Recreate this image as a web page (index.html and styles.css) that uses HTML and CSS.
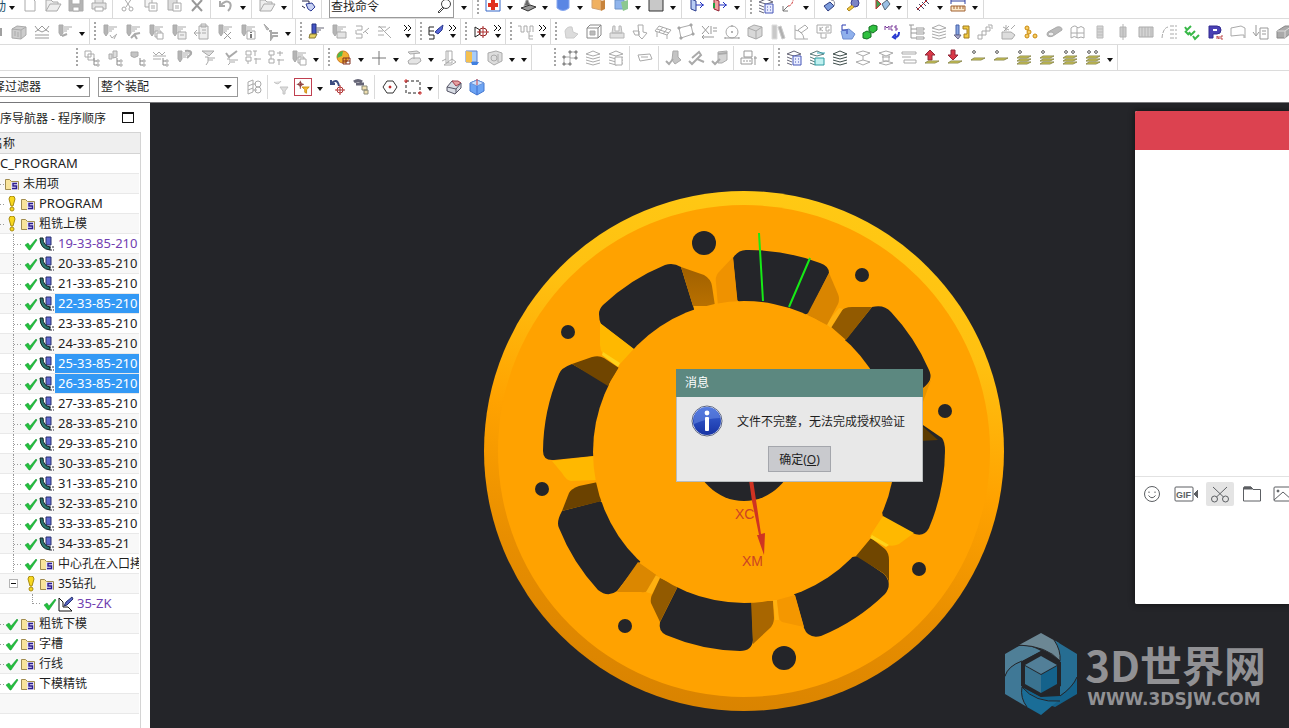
FILE: index.html
```html
<!DOCTYPE html>
<html lang="zh-CN">
<head>
  <meta charset="UTF-8" />
  <meta name="viewport" content="width=device-width, initial-scale=1.0"/>
  <title>工序导航器</title>
  <link rel="stylesheet" href="styles.css">
</head>
<body>

<header class="toolbars">
  <div class="bar bar-top">
    <div class="group">
      <span class="cut-text">动</span>
      <div class="tools" data-tools="v new open save print | cut copy paste delete | undo v | open v | touch |"></div>
      <label class="search">
        <input type="text" value="查找命令" aria-label="查找命令">
        <svg viewBox="0 0 18 18"><circle cx="11" cy="7" r="4.5"/><path d="M8 10l-5 5 1 1 5-5"/></svg>
      </label>
      <div class="tools" data-tools="v"></div>
    </div>
    <div class="group grip"><div class="tools" data-tools="fit v shade v cylinder v cubeOrange cubeGreen v swatch v | exit exitRed v"></div></div>
    <div class="group grip"><div class="tools" data-tools="layerBlue axes v | gem key | play v | measure v ruler v"></div></div>
  </div>

  <div class="bar">
    <div class="group">
      <span class="cut-icon"></span>
      <div class="tools" data-tools="block hatch mill v"></div>
    </div>
    <div class="group grip"><div class="tools" data-tools="millCheck millFork millCopy millPage clip millX millInfo millDrop v"></div></div>
    <div class="group grip"><div class="tools" data-tools="millBlue millBox combA combX _ »"></div></div>
    <div class="group grip"><div class="tools" data-tools="brush »"></div></div>
    <div class="group grip"><div class="tools" data-tools="target »"></div></div>
    <div class="group grip"><div class="tools" data-tools="wave »"></div></div>
    <div class="group grip last"><div class="tools" data-tools="lump frame vise wedge grid plane xt circle cube plates angle kg blob chain mcs tree stack probe steps spark beads tube map bolt nut hatchBox list greens parts flag down solid"></div></div>
  </div>

  <div class="bar bar-inset">
    <div class="group grip"><div class="tools" data-tools="boxes boxTree discTree hatchTree millLoop millFunnel millTick tiles tiles2 millCopy v"></div></div>
    <div class="group grip"><div class="tools" data-tools="ball v plus v plinth v column page camera v v"></div></div>
    <div class="group grip apart"><div class="tools" data-tools="nodes stack stackPage | card | lumpTick curve cubeTick | abc v"></div></div>
    <div class="group grip"><div class="tools" data-tools="layerBlue layerTeal stackDark layerThin layerSwap rows up downRed flat1 flat1 flat3 flat3 flat4 flat4 v"></div></div>
  </div>

  <div class="bar bar-select">
    <span class="drop drop-cut"><select aria-label="选择过滤器"><option>择过滤器</option></select></span>
    <span class="drop"><select aria-label="选择范围"><option>整个装配</option></select></span>
    <div class="tools" data-tools="mesh | funnel snap v orbit walk | hexagon marquee v | house cubeBlue"></div>
  </div>
</header>

<main>
  <aside class="navigator">
    <div class="nav-title">
      <h1>序导航器 - 程序顺序</h1>
      <button class="max" aria-label="最大化"></button>
    </div>
    <div class="nav-body">
      <div class="nav-head">名称</div>
      <ul class="tree" id="tree"></ul>
    </div>
  </aside>

  <section class="stage">
    <svg class="scene" viewBox="150 103 1139 625" preserveAspectRatio="xMidYMid slice">
      <defs>
        <linearGradient id="rim" x1="0.6" y1="0" x2="0.4" y2="1">
          <stop offset="0" stop-color="#ffc914"/>
          <stop offset="0.25" stop-color="#ffc010"/>
          <stop offset="0.5" stop-color="#ffa200"/>
          <stop offset="0.75" stop-color="#e88e00"/>
          <stop offset="1" stop-color="#d98300"/>
        </linearGradient>
        <linearGradient id="wall" x1="0" y1="0" x2="0" y2="1">
          <stop offset="0" stop-color="#a06000"/>
          <stop offset="1" stop-color="#b87000"/>
        </linearGradient>
      </defs>
      <circle cx="744" cy="451" r="260" fill="url(#rim)"/>
      <circle cx="744" cy="451" r="246" fill="#ffa200"/>

      <!-- windows between the spokes -->
      <g fill="#242529">
        <path d="M599 314Q599 309 603 305A201 201 0 0 1 665 265Q673 262 681 267L694 309V330L640 354 601 324Q599 320 599 314z"/>
        <path d="M543 451A201 201 0 0 1 559 374Q561 368 572 364L608 384 625 400 620 460 593 456 554 460Q543 461 543 451z"/>
        <path d="M562 511L600 501 660 540 639 563 617 591Q608 598 598 590A201 201 0 0 1 559 528Q556 522 562 511z"/>
        <path d="M677 588V570H751L753 640Q752 651 740 651A201 201 0 0 1 666 635Q658 631 660 622z"/>
        <path d="M795 596L780 570 858 556 884 574Q893 584 885 594A201 201 0 0 1 821 636Q808 639 804 628z"/>
        <path d="M883 517L870 450 923 425 942 438Q945 442 945 451A201 201 0 0 1 929 528Q924 538 912 533z"/>
        <path d="M847 338L872 307Q884 304 891 312A201 201 0 0 1 929 370Q934 380 923 388L880 395 840 345z"/>
        <path d="M737 300L733 258Q738 250 746 250A201 201 0 0 1 820 263Q829 266 829 273L809 313 770 330z"/>
      </g>

      <!-- spoke side walls -->
      <path fill="url(#wall)" d="M681 267L704 275Q711 279 712 286L715 306H693z"/>
      <path fill="#ef9200" d="M733 257L718 273Q715 277 716 283L718 306H738z"/>
      <path fill="#ffb800" d="M600 323L634 349 618 366 603 354Q600 350 600 345z"/>
      <path fill="#ffd21a" d="M603 352L620 363 618 367 602 355z"/>
      <path fill="#704500" d="M572 364L592 357Q599 355 604 358L619 368 608 386z"/>
      <path fill="#ffb800" d="M552 461L596 456V480L571 481Q566 480 562 473z"/>
      <path fill="#6b4200" d="M598 482L579 486Q571 489 569 493L562 511 602 501z"/>
      <path fill="#db8700" d="M638 562L658 576 649 590Q646 593 641 592H617z"/>
      <path fill="#ffb010" d="M656 575L660 578 652 594 646 592z"/>
      <path fill="#925a00" d="M660 578L678 586 660 622 651 603Q650 598 653 593z"/>
      <path fill="#a86600" d="M751 601H773L774 618Q774 625 769 629L753 644z"/>
      <path fill="#ffb010" d="M773 600H777L779 620H775z"/>
      <path fill="#f49700" d="M777 600L795 595 804 627 782 622Q779 620 779 617z"/>
      <path fill="#704600" d="M871 538L885 549Q889 553 889 560V583Q888 577 883 573L856 556z"/>
      <path fill="#ffb800" d="M883 516L914 533 899 544Q893 547 887 545L870 536z"/>
      <path fill="#ffd21a" d="M872 535L889 545 886 547 870 538z"/>
      <path fill="#5c3b00" d="M920 424L938 440 920 441z"/>
      <path fill="#925a00" d="M872 307H852Q844 307 840 312L830 326 846 340z"/>
      <path fill="#ffb010" d="M839 308L843 309 831 328 826 324z"/>
      <path fill="#d98500" d="M829 273L838 294Q840 299 838 304L827 325 807 315z"/>
      <path fill="#e79300" d="M931 380L923 389V402z"/>

      <circle cx="744" cy="452" r="151" fill="#ffa200"/>
      <circle cx="744" cy="451" r="50" fill="#242529"/>
      <g fill="#242529">
        <circle cx="704" cy="243" r="12"/>
        <circle cx="784" cy="658" r="12"/>
        <circle cx="568" cy="332" r="7"/>
        <circle cx="862" cy="275" r="7"/>
        <circle cx="945" cy="411" r="7"/>
        <circle cx="919" cy="569" r="7"/>
        <circle cx="625" cy="626" r="7"/>
        <circle cx="542" cy="489" r="7"/>
      </g>
      <path d="M759 233L763 301M810 258L789 307" stroke="#16ea16" stroke-width="2" fill="none"/>
      <path d="M749 480L752 501 759 535 757 535 764 555 765 533 761 534 756 500 753 480z" fill="#cf3322"/>
      <g class="axis">
        <text x="735" y="519">XC</text>
        <text x="742" y="566">XM</text>
      </g>
    </svg>

    <div class="dialog" role="dialog" aria-labelledby="dlg-title">
      <h2 id="dlg-title">消息</h2>
      <div class="dialog-body">
        <svg class="info" viewBox="0 0 32 32">
          <defs>
            <linearGradient id="blue" x1="0" y1="0" x2="0" y2="1">
              <stop offset="0" stop-color="#3c66d8"/>
              <stop offset="1" stop-color="#1733a4"/>
            </linearGradient>
          </defs>
          <circle cx="16" cy="16" r="15" fill="#fff" stroke="#5a6482"/>
          <circle cx="16" cy="16" r="14" fill="url(#blue)"/>
          <path d="M3 17A13 13 0 0 1 29 13Q16 13 3 19z" fill="#6f92e8" opacity="0.5"/>
          <circle cx="16" cy="8" r="2.4" fill="#fff"/>
          <rect x="14" y="12" width="4" height="14" rx="1" fill="#fff"/>
        </svg>
        <p>文件不完整，无法完成授权验证</p>
      </div>
      <button class="ok">确定(<u>O</u>)</button>
    </div>

    <div class="chat">
      <div class="chat-head"></div>
      <div class="chat-log"></div>
      <div class="chat-tools">
        <button aria-label="表情"><svg viewBox="0 0 18 18"><circle cx="9" cy="9" r="7.5"/><path d="M6 6.500v1.500M12 6.500v1.500M5.500 10.500Q9 15 12.500 10.500"/></svg></button>
        <button class="gif" aria-label="GIF"><svg viewBox="0 0 24 18"><rect x="1" y="2" width="18" height="14" rx="1"/><text x="2" y="13">GIF</text><path d="M20 9l4-4v8z" class="solid"/></svg></button>
        <button class="on" aria-label="截图"><svg viewBox="0 0 18 18"><circle cx="3.500" cy="14" r="3"/><circle cx="14.500" cy="14" r="3"/><path d="M5.500 12L16 2M12.500 12L2 2"/></svg></button>
        <button aria-label="文件"><svg viewBox="0 0 18 18"><path d="M.5 16V3Q.5 2 2 2H8L10 4.500H17.500V16z"/><path d="M1 2h7l1.500 2H1z" class="solid"/></svg></button>
        <button class="pic" aria-label="图片"><svg viewBox="0 0 22 18"><rect x="1" y="2" width="20" height="14" rx="1"/><circle cx="5" cy="6" r="1" class="solid"/><path d="M1 15l9-8 9 8"/></svg></button>
      </div>
      <textarea aria-label="消息"></textarea>
    </div>

    <div class="brand">
      <svg viewBox="0 0 72 82">
        <path d="M36 0L54 10Q56 18 55 28 40 13 14 12z" fill="#6c8794"/>
        <path d="M49 7L72 21V44Q68 54 55 63V28Q56 17 49 7z" fill="#266d92"/>
        <path d="M72 44V61L50 74Q30 68 17 54L36 64 55 63Q68 54 72 44z" fill="#14628b"/>
        <path d="M53 68L36 82 22 74Q15 65 17 54 30 68 53 68z" fill="#1a6d97"/>
        <path d="M22 74L0 61V44Q3 33 17 28V54Q15 65 22 74z" fill="#3f7896"/>
        <path d="M0 43V21L14 13Q26 12 36 18L17 28Q4 33 0 43z" fill="#4f7f97"/>
        <path d="M36 18L56 29V53L36 64 16 53V29z" fill="#242529"/>
        <path d="M36 23L52 32 36 41 20 32z" fill="#527f98"/>
        <path d="M20 33L36 42V60L20 51z" fill="#3a7390"/>
        <path d="M52 33L36 42V60L52 51z" fill="#14628b"/>
        <path d="M14 12Q42 13 55 28Q56 17 49 7M72 44Q68 54 55 63M17 54Q30 70 55 68M17 54Q15 65 22 74M17 28Q3 33 0 43" fill="none" stroke="#242529"/>
      </svg>
      <div>
        <strong>3D世界网</strong>
        <span>WWW.3DSJW.COM</span>
      </div>
    </div>
  </section>
</main>

<script src="app.js"></script>
</body>
</html>
```

FILE: styles.css
```css
* {
  box-sizing: border-box;
}

body {
  margin: 0;
  height: 100vh;
  display: flex;
  flex-direction: column;
  overflow: hidden;
  background: #fff;
  color: #1e1e1e;
  font-family: "Noto Sans", "Noto Sans CJK SC", sans-serif;
  font-size: 12px;
}

button {
  border: 0;
  padding: 0;
  background: none;
  font: inherit;
  color: inherit;
}

/* toolbars */
.toolbars {
  flex: none;
  overflow: hidden;
  border-bottom: 1px solid #77777a;
}

.bar {
  display: flex;
  height: 26px;
  border-bottom: 1px solid #dcdcdc;
}

.bar-top {
  margin-top: -7px;
}

.bar-inset {
  padding-left: 72px;
}

.group {
  display: flex;
  flex: none;
  align-items: center;
  padding-right: 1px;
  border-right: 1px solid #dadada;
}

.bar-top .group {
  padding-right: 2px;
}

.group.last {
  border: 0;
}

.group.apart {
  margin-left: 18px;
}

.grip::before {
  content: "";
  width: 2px;
  height: 20px;
  margin: 0 2px 0 4px;
  background: repeating-linear-gradient(#a6a6a6 0 2px, transparent 2px 4px);
}

.cut-text {
  width: 6px;
  display: flex;
  justify-content: flex-end;
  overflow: hidden;
  color: #20506a;
}

.cut-icon {
  width: 7px;
  height: 8px;
  border-right: 5px solid #fff;
  background: #a0a0a0;
}

.tools {
  display: flex;
  align-items: center;
}

.tool {
  display: flex;
  justify-content: center;
  width: 23px;
}

.tool svg {
  width: 18px;
  height: 18px;
  fill: none;
  stroke: #aaa;
}

.tool.narrow {
  width: 20px;
}

.tool.boxed svg {
  border: 1px solid #c04050;
}

.caret {
  width: 12px;
  height: 18px;
  display: flex;
  flex-direction: column;
  align-items: center;
  justify-content: center;
  padding-top: 4px;
}

.caret::after {
  content: "";
  border: 3px solid transparent;
  border-top: 4px solid #111;
  border-bottom: 0;
}

.caret.more {
  padding: 0;
  gap: 3px;
}

.caret svg {
  width: 8px;
  height: 6px;
  fill: none;
  stroke: #111;
}

.sep {
  width: 6px;
  height: 24px;
  border-left: 1px solid #dadada;
  margin-left: 2px;
  margin-right: -2px;
}

.space {
  width: 6px;
}

.search {
  display: flex;
  align-items: center;
  width: 125px;
  height: 24px;
  margin: 0 4px;
  border: 1px solid #9a9a9a;
}

.search input {
  flex: 1;
  min-width: 0;
  border: 0;
  padding: 0 1px;
  outline: 0;
  font: inherit;
  color: inherit;
}

.search svg {
  width: 18px;
  height: 18px;
  fill: none;
  stroke: #444;
}

.bar-select {
  height: 31px;
  align-items: center;
  border: 0;
}

.drop {
  position: relative;
  width: 140px;
  margin: 0 4px 0 8px;
}

.drop-cut {
  width: 100px;
  margin: 0 0 0 -10px;
}

.drop select {
  appearance: none;
  display: block;
  width: 100%;
  height: 20px;
  padding: 0 2px;
  border: 1px solid #999;
  border-radius: 0;
  background: #fff;
  color: inherit;
  font: inherit;
}

.drop::after {
  content: "";
  position: absolute;
  right: 6px;
  top: 8px;
  border: 4px solid transparent;
  border-top-color: #111;
  border-bottom: 0;
}

/* navigator */
main {
  flex: 1;
  display: flex;
  min-height: 0;
}

.navigator {
  flex: none;
  display: flex;
  flex-direction: column;
  width: 141px;
  margin-right: 9px;
}

.nav-title {
  display: flex;
  align-items: center;
  justify-content: space-between;
  height: 29px;
  padding-right: 7px;
}

.nav-title h1 {
  margin: 0;
  font-size: 12px;
  font-weight: normal;
}

.max {
  width: 12px;
  height: 11px;
  border: 1px solid #111;
  border-top-width: 2px;
}

.nav-body {
  flex: 1;
  border-right: 1px solid #d4d4d4;
}

.nav-head {
  height: 22px;
  line-height: 22px;
  border-top: 1px solid #d4d4d4;
  border-bottom: 1px solid #d4d4d4;
  background: #efefef;
  text-indent: -9px;
  overflow: hidden;
}

.tree {
  margin: 0;
  padding: 0;
  list-style: none;
}

.row {
  display: flex;
  align-items: center;
  height: 20px;
  margin-right: 1px;
  border-bottom: 1px solid #e9e9e9;
  overflow: hidden;
  white-space: nowrap;
}

.row:nth-child(even) {
  background: #f8f8f8;
}

.row svg {
  flex: none;
  width: 16px;
  height: 16px;
}

.branch {
  flex: none;
  width: 4px;
  height: 20px;
  background: repeating-linear-gradient(90deg, #999 0 1px, transparent 1px 3px) 0 10px / 8px 1px no-repeat;
}

.level2 .branch {
  width: 10px;
  margin-left: 13px;
  border-left: 1px dotted #999;
}

.level3 .branch {
  width: 10px;
  height: 10px;
  margin-left: 32px;
  align-self: flex-start;
  border-left: 1px dotted #999;
  background-position: 0 9px;
}

.fold {
  flex: none;
  width: 9px;
  height: 9px;
  margin: 0 5px 0 9px;
  border: 1px solid #b5b5b5;
  background: linear-gradient(#111, #111) center / 5px 1px no-repeat #fff;
}

.label {
  flex: 1;
  height: 19px;
  line-height: 19px;
  padding-left: 3px;
}

.label.latin {
  font-size: 13px;
}

.purple .label {
  color: #7040b0;
}

.selected .label {
  background: #3399f5;
  color: #fff;
}

.root .label {
  padding: 0;
}

/* graphics window */
.stage {
  position: relative;
  flex: 1;
  min-width: 0;
  overflow: hidden;
  background: #242529;
}

.scene {
  display: block;
  width: 100%;
  height: 100%;
}

.axis {
  font: 14px "Liberation Sans", sans-serif;
  fill: #cc4424;
}

.dialog {
  position: absolute;
  left: 526px;
  top: 266px;
  width: 247px;
  padding-bottom: 9px;
  border: 1px solid #b8bcbc;
  border-top: 0;
  background: #e8e8e8;
}

.dialog h2 {
  margin: 0 -1px;
  padding-left: 9px;
  line-height: 28px;
  background: #5c8880;
  color: #fff;
  font-size: 12px;
  font-weight: normal;
}

.dialog-body {
  display: flex;
  align-items: center;
  gap: 14px;
  height: 48px;
  padding-left: 14px;
}

.dialog-body p {
  margin: 0;
}

.info {
  width: 32px;
  height: 32px;
}

.ok {
  display: block;
  width: 63px;
  height: 26px;
  margin: 1px auto 0;
  border: 1px solid #a4a6ac;
  background: #c9cace;
}

.chat {
  position: absolute;
  left: 985px;
  right: 0;
  top: 8px;
  height: 493px;
  display: flex;
  flex-direction: column;
  border-radius: 2px 0 0 2px;
  overflow: hidden;
  background: #fff;
  box-shadow: 0 0 6px #111;
}

.chat-head {
  height: 39px;
  background: #dc4250;
}

.chat-log {
  height: 327px;
  border-bottom: 1px solid #e2e2e2;
}

.chat-tools {
  display: flex;
  align-items: center;
  gap: 4px;
  height: 34px;
  padding-left: 3px;
}

.chat-tools button {
  flex: none;
  width: 28px;
  height: 24px;
  display: flex;
  align-items: center;
  justify-content: center;
  border-radius: 2px;
}

.chat-tools .gif {
  width: 32px;
}

.chat-tools .gif svg {
  width: 24px;
}

.chat-tools .pic svg {
  width: 22px;
}

.chat-tools .on {
  background: #e4e4e4;
}

.chat-tools svg {
  width: 18px;
  height: 18px;
  fill: none;
  stroke: #5c5f63;
}

.chat-tools .solid {
  fill: #5c5f63;
}

.chat-tools text {
  font: bold 9px "Liberation Sans", sans-serif;
  fill: #5c5f63;
  stroke: none;
}

.chat textarea {
  flex: 1;
  border: 0;
  resize: none;
  outline: 0;
}

.brand {
  position: absolute;
  right: 23px;
  bottom: 13px;
  display: flex;
  align-items: center;
  gap: 8px;
  color: #919194;
}

.brand svg {
  width: 72px;
  height: 82px;
}

.brand strong {
  display: block;
  font: bold 42px/50px "Noto Sans CJK SC", sans-serif;
}

.brand span {
  display: block;
  padding-left: 2px;
  font: bold 17px/20px "DejaVu Sans", sans-serif;
}
```

FILE: app.js
```javascript
// pieces shared by several icons
const mill = '<path d="M3 2h4v8l-2 3-2-3z" fill="#b4b4b4"/><path d="M8 4h8M8 6h5M8 8h3"/>';
const stack = '<path d="M2 5l7-3 7 3-7 2zM2 8l7 2 7-2M2 11l7 2 7-2M2 14l7 2 7-2"/>';
const sheet = (y) => `<path d="M5 ${y}h11l-4 2H2z" fill="#d8cf4c" stroke="#8f8d55"/>`;
const tree = '<path d="M11 9v7h3M11 12h3" stroke="#888"/><path d="M14 11h2v2h-2zM14 15h2v2h-2z"/>';
const diamond = (x) => `<path d="M${x} 1l2 2-2 2-2-2z" fill="#aaa" stroke="#888"/>`;

const icons = {
  new: '<path d="M4 1h7l3 3v10H4z"/>',
  open: '<path d="M2 14V3h5l2 2h5v2M2 14l4-7h11l-4 7z" fill="#eee"/>',
  save: '<path d="M2 2h14v12H2z" fill="#b4b4b4"/><path d="M5 2h8v5H5zM6 10h6v4H6z" fill="#fff"/>',
  print: '<path d="M5 6V1h8v5M2 6h14v6H2z" fill="#e4e4e4"/><path d="M5 10h8v4H5z" fill="#fff"/>',
  cut: '<path d="M5 1l6 9M13 1L7 10"/><circle cx="5" cy="12" r="2"/><circle cx="12" cy="12" r="2"/>',
  copy: '<path d="M3 2h7v8H3z" fill="#f4f4f4"/><path d="M7 6h8v8H7zM9 9h4M9 11h4" fill="#fff"/>',
  paste: '<path d="M3 2h9v11H3z" fill="#ddd"/><path d="M8 6h8v8H8zM10 9h4M10 11h4" fill="#fff"/>',
  delete: '<path d="M4 3l10 11M14 3L4 14" stroke="#999" stroke-width="2"/>',
  undo: '<path d="M3 4v5h5M3 9q6-7 10-3 2 4-2 8" stroke-width="2"/>',
  touch: '<path d="M3 4h7v5M3 9l3 2" stroke="#224"/><path d="M7 7l6-1 3 4-4 4-3-2z" fill="#c8d2f4" stroke="#2b3a94"/>',
  fit: '<path d="M2 1h14v13H2z" fill="#fff" stroke="#3668c8"/><path d="M4 7h4V3M14 7h-4V3M4 9h4v4M14 9h-4v4" stroke="#e03020" stroke-width="2"/>',
  shade: '<path d="M8 1l3 7-6 1z" fill="#666"/><path d="M2 11l9-3 6 2-8 4z" fill="#999" stroke="#333"/>',
  cylinder: '<path d="M3 2h12v9q-6 5-12 0z" fill="#5a86e4" stroke="#88a8f0"/>',
  cubeOrange: '<path d="M3 3l9-2v12l-9-2z" fill="#f0b060" stroke="#d0a070"/><path d="M12 4l4-1v9l-4 2z" fill="#c8843c" stroke="none"/>',
  cubeGreen: '<path d="M3 3h9v9H3z" fill="#8fb4ec" stroke="#6f94c8"/><path d="M9 5l7-2v9l-5 2z" fill="#8cc890" stroke="none"/>',
  swatch: '<path d="M2 0h14v14H2z" fill="#c8c8c8" stroke="#333"/>',
  exit: '<path d="M3 2l5 2v10l-5-2zM3 2h7" fill="#b8ccf4" stroke="#2c3e90"/><path d="M8 8h8M12 5l3 3-3 3" stroke="#2030c0"/>',
  exitRed: '<path d="M3 2l5 2v10l-5-2zM3 2h7" fill="#f0a0a0" stroke="#902030"/><path d="M8 8h8M12 5l3 3-3 3" stroke="#2030c0"/><path d="M3 6v5" stroke="#20a040" stroke-width="2"/>',
  layerBlue: '<path d="M2 5l7-3 7 3-7 2zM2 8l5 2M2 11l5 2M2 14l5 2" stroke="#667"/><path d="M8 7h8v9H8z" fill="#e8ecff" stroke="#4656b8"/><path d="M10 10h1M13 10h1M10 13h1M13 13h1" stroke="#4656b8"/>',
  layerTeal: '<path d="M2 5l7-3 7 3-7 2zM2 8l5 2M2 11l5 2M2 14l5 2" stroke="#5a7a7a"/><path d="M7 9h9v7H7z" fill="#bff0f0" stroke="#2a9aa0"/><path d="M9 4h8" stroke="#3ab"/>',
  stackDark: `<g stroke="#3d4c4a">${stack}</g>`,
  axes: '<path d="M3 14V9M3 14h5M3 14l5-5" stroke="#777"/><path d="M8 9q4 0 5-6l3-2" stroke="#d04040" stroke-dasharray="3 1"/>',
  gem: '<path d="M3 9l6-4 4 4-6 5z" fill="#7c9cdc" stroke="#2c3a80"/><path d="M10 3q5 0 3 6" stroke="#889"/>',
  key: '<circle cx="11" cy="6" r="4" fill="#7c84c4" stroke="#3a3f90"/><path d="M8 8l-5 4 2 2 5-4" fill="#f0c840" stroke="#b08820"/>',
  play: '<path d="M3 2l5 5-5 5z" fill="#40a050" stroke="#c03030"/><path d="M9 7l5-4 3 4-5 6z" fill="#9cc0e4" stroke="#567"/>',
  measure: '<path d="M3 13L15 1" stroke="#d02020"/><path d="M5 7l5 5M8 5l4 4M11 3l4 4M2 10l4 4" stroke="#446"/>',
  ruler: '<path d="M2 2v5M16 2v5M2 4h14" stroke="#2c3ea0"/><path d="M2 9h14v5H2zM5 9v3M8 9v3M11 9v3M14 9v3" fill="#fbe8c8" stroke="#a06030"/>',
  block: '<path d="M2 6l5-3 9 1v8l-5 4-9-1z" fill="#ccc"/><path d="M2 6l9 1 5-3M11 7v9M5 8v5M8 9v5"/>',
  hatch: '<path d="M2 3l3 4 4-4 4 4 3-4M2 9l3-2 4 2 4-2 3 2M2 12h14M2 15h14" stroke="#999"/>',
  mill: mill + '<path d="M6 13l5-2" stroke-width="2"/>',
  millCheck: mill + '<path d="M9 12l2 3 5-4M15 12l-2 4"/>',
  millFork: mill + '<path d="M7 15l4-4 5-1M10 11l3 5" stroke-width="2"/>',
  millCopy: mill + '<path d="M8 8h6v6H8z" fill="#eee"/><path d="M10 10h6v6h-6z" fill="#fff"/>',
  millPage: mill + '<path d="M8 9h8v7H8zM10 12h4" fill="#eee"/>',
  clip: '<path d="M6 3h9v13H6zM8 1h5v3H8z" fill="#eee"/><path d="M9 7h4M9 10h4M1 10h7M4 7l-3 3 3 3"/>',
  millX: mill + '<path d="M8 9l7 7M15 9l-7 7" stroke="#999"/>',
  millInfo: mill + '<path d="M8 8h8v8H8z" fill="#fff"/><path d="M12 9v1M12 11v4" stroke="#777" stroke-width="2"/>',
  millDrop: '<path d="M2 1l5 5-2 1z" fill="#bbb"/><path d="M7 8h2v8l2-3h5M9 10h7" stroke-width="2"/>',
  millBlue: '<path d="M5 1h4v10H5z" fill="#4454c4" stroke="#223080"/><path d="M3 11h7l-2 4H2z" fill="#e4d060" stroke="#887830"/><path d="M9 5h8M9 7h5M9 9h3" stroke="#667"/>',
  millBox: mill + '<path d="M7 9h9v6H7z" fill="#e4e4e4"/>',
  combA: '<path d="M3 3h6v4H4M3 7v4h6M3 15h6v-4M10 10l6-5M12 8l3 3"/>',
  combX: '<path d="M2 4h8M2 8h5M2 12h6M3 3l12 12M9 8l5-4"/>',
  brush: '<path d="M7 4H2v4h5M2 8v4h5M7 12v4H2" stroke="#222"/><path d="M8 9l3-3 5-4-1 5-4 4z" fill="#5868d8" stroke="#2c3a90"/>',
  target: '<path d="M3 4v10M3 4l5 3v4l-5 3" stroke="#222"/><circle cx="11" cy="9" r="4" stroke="#902020"/><path d="M11 3v12M5 9h12" stroke="#b03030"/>',
  wave: '<path d="M1 3h3v6h3V3h3v6h3V3h3v6M12 10v6h4M12 13h4"/>',
  lump: '<path d="M3 8q2-5 7-4l1 5 5 2-4 4H4z" fill="#dcdcdc" stroke="#ccc"/>',
  frame: '<path d="M2 5l3-3h11v10l-3 3H2zM2 5h11v10M13 5l3-3" stroke="#888"/><path d="M5 8h5v4H5z" fill="#bbb"/>',
  vise: '<path d="M5 3h2v5h4V3h2l1 7H4zM2 10h14v5H2z" fill="#e0e0e0" stroke="#b8b8b8"/>',
  wedge: '<path d="M7 2h5v7l4 1-5 6-3-3zM2 8h6v4H4z"/>',
  grid: '<path d="M5 3l12 4-4 5L1 8zM9 4l-4 5M13 6l-4 5M3 6l12 4M3 9v5M13 12v4"/>',
  plane: '<path d="M2 5l12-3 2 9-12 4z"/><path d="M1 4h2v2H1zM13 1h2v2h-2zM15 10h2v2h-2zM3 14h2v2H3z" fill="#999"/>',
  xt: '<path d="M2 3l7 8M9 3l-7 8M11 3v8M13 5h4M13 8h4M2 14h12M2 14l2-2M2 14l2 2" stroke="#999"/>',
  circle: '<circle cx="9" cy="9" r="6"/><path d="M9 2v2M9 8v2M8 9h2M2 15h14M2 14v2M16 14v2" stroke="#999"/>',
  cube: '<path d="M2 5l6-3 8 2v9l-6 3-8-3z" fill="#d8d8d8"/><path d="M2 5l8 3 6-4M10 8v8"/>',
  plates: '<path d="M3 2h5v14H3z" fill="#c8c8c8" stroke="#ddd"/><path d="M9 4l3-1 4 12-3 1z" fill="#b0b0b0" stroke="#ccc"/>',
  angle: '<path d="M3 2v14h13M3 7q8 1 9 9M6 7l7-5 3 3-7 5z"/>',
  kg: '<path d="M2 2h14v8H2zM5 4v4M5 6l3-2M5 6l3 2M14 4h-3v4h3V6M6 10v5h5v-4"/>',
  blob: '<path d="M3 8l8-2 6 5-3 5H5z" fill="#8fb0ec" stroke="#6c8cd0"/><path d="M8 2H4v5h4M9 6v5" stroke="#2c3cb0"/>',
  chain: '<path d="M2 10l4-2 4 2v4l-4 2-4-1zM8 4l4-2 4 1v4l-4 3-4-2z" fill="#30c040" stroke="#107020"/>',
  mcs: '<path d="M1 7V3l2 2 2-2v4M9 3H7v4h2M13 3h-2v2h2v2h-2" stroke="#7a3a9a"/><path d="M15 9q0 5-4 5M12 11l-3 3 3 2" stroke="#2838d0" stroke-width="2"/>',
  tree: '<path d="M2 2h5M4 2v13h4M4 6h4M4 10h4M9 5h8v2H9zM9 9h8v2H9zM9 14h8v2H9z" stroke="#999"/>',
  stack: stack,
  probe: '<path d="M3 2h3v10H3z" fill="#88a4e0" stroke="#4460a8"/><path d="M1 12h7l-3 4z" fill="#aac" stroke="#668"/><path d="M10 3h6v12h-5v-4h3V6h-4z" fill="#f0c840" stroke="#a07c20"/>',
  steps: '<path d="M2 12h4v4H2zM6 8h4v4H6zM10 4h4v4h-4zM12 2h4v4"/>',
  spark: '<path d="M3 9h9l4 3-3 4H3z" fill="#ddd"/><path d="M7 2v6M4 4l6 3M10 3L5 8M12 6l4-4"/>',
  beads: '<g fill="#f8cc60" stroke="#c88a10"><circle cx="5" cy="5" r="2"/><circle cx="5" cy="13" r="2"/><circle cx="13" cy="13" r="2"/><circle cx="7" cy="9" r="2"/></g>',
  tube: '<path d="M3 9l9-5q5-1 5 3l-9 6q-6 2-6-2z" fill="#bbb"/><ellipse cx="6" cy="11" rx="3" ry="2" fill="#eee"/>',
  map: '<path d="M3 5q4-4 7 0 3-3 6 0v10q-3-2-6 0-4-3-7 0zM9 4v11M3 10h13"/>',
  bolt: '<path d="M6 3h6v12H6zM6 6h6M6 9h6M6 12h6" fill="#d4d4d4" stroke="#bbb"/>',
  nut: '<path d="M9 1v16M6 4h6v10H6z" fill="#ccc" stroke="#b4b4b4"/>',
  hatchBox: '<path d="M2 4h14v10H2z" fill="#d4d4d4"/><path d="M5 4v10M8 4v10M11 4v10M14 4v10" stroke="#b4b4b4"/>',
  list: '<path d="M2 15q1-10 6-11M10 3h7M10 7h7M10 11h7M10 15h7" stroke-dasharray="4 1"/>',
  greens: '<path d="M2 4l2 3 4-4M6 9l2 3 4-4M10 13l2 3 4-4M2 8l4 4" stroke="#38b848" stroke-width="2"/>',
  parts: '<path d="M3 3h8q4 0 4 4t-4 4H7v4H3z" fill="#4a40b4" stroke="#322a90"/><path d="M7 6h4v2H7z" fill="#fff" stroke="none"/><path d="M11 16v-3l2 3v-3M17 13h-2v3h2" stroke="#c04848"/>',
  flag: '<path d="M2 5l10-2 4 2v10M2 5v8l10-1M12 12h3v3"/>',
  down: '<path d="M4 2v10M1 9l3 4 3-4M8 5h8v11H8zM10 8h4M10 11h4" stroke="#999"/>',
  solid: '<path d="M2 8l8-5h7v6l-7 6H2z" fill="#aaa" stroke="#888"/><path d="M2 8h8l7-5M10 8v7" stroke="#ddd"/>',
  boxes: '<path d="M2 2h6v6H2zM5 5h6v6H5z"/>' + tree,
  boxTree: '<path d="M3 10V5h3v5zM7 9V2h4v6z" fill="#ddd"/>' + tree,
  discTree: '<path d="M2 3h7v4q-4 3-7 0z" fill="#c4c4c4"/>' + tree,
  hatchTree: '<path d="M1 3l3 3 3-3 3 3 3-3M1 7h13M1 10h8"/>' + tree,
  millLoop: mill + '<path d="M10 2q7-1 6 3l-4 4" stroke-width="2"/>',
  millFunnel: '<path d="M4 2h12l-5 5z" fill="#ddd"/><path d="M7 8h3v5l-2 3M10 9h7M10 11h5"/>',
  millTick: '<path d="M5 4l3 4 8-6" stroke-width="2"/><path d="M6 10h3v4l-2 2M10 11h7M10 13h4"/>',
  tiles: '<path d="M2 2h5v4H2zM2 8h5v4H2zM9 2h4M11 2v5M10 10h7M12 9v6M4 12v3"/>',
  tiles2: '<path d="M2 2h5v4H2zM2 10h5v4H2zM4 6v4M10 4h6M13 2v5M10 11h7M12 10v6"/>',
  ball: '<circle cx="8" cy="8" r="6" fill="#f0b030" stroke="#d07820"/><path d="M8 2q-6 1-6 7l5-2z" fill="#50b848" stroke="none"/><path d="M8 9h7v6H8zM8 12h7M11 9v6" stroke="#803020"/>',
  plus: '<path d="M9 2v14M2 9h14" stroke="#777"/>',
  plinth: '<path d="M3 3l9-1 3 2-10 1zM9 5v5M3 12l4-3h8l1 3-4 3H4z" fill="#e4e4e4"/>',
  column: '<path d="M6 2h6v12H6zM8 2v12M2 12l4-2M12 10l4 3-5 3H4z"/>',
  page: '<path d="M3 2h11v11H3z" fill="#a8ccf8" stroke="#6080c8"/><path d="M3 2l6 1v11l-6-1z" fill="#f4c050" stroke="none"/><path d="M8 13h8l-2 3H9z" fill="#4080e0" stroke="none"/>',
  camera: '<path d="M2 4l8-2 6 2v8l-8 4-6-4z" fill="#ddd"/><circle cx="8" cy="9" r="3"/><path d="M12 5v8"/>',
  nodes: '<path d="M3 8h6v7H3zM9 3h6v6H9z"/><path d="M2 7h2v2H2zM8 14h2v2H8zM14 2h2v2h-2zM8 2h2v2H8zM14 8h2v2h-2zM2 14h2v2H2z" fill="#888" stroke="#888"/>',
  stackPage: stack + '<path d="M8 8h7v8H8z" fill="#fff"/>',
  card: '<path d="M2 6l12-1 2 5-12 2zM5 8h7"/>',
  lumpTick: '<path d="M8 2h5v6l3 3-6 4-3-4z" fill="#c4c4c4"/><path d="M1 12l3 3 4-5" stroke-width="2"/>',
  curve: '<path d="M4 9l7-6 2 3-4 4 7 3M1 12l3 3 5-5" stroke-width="2"/>',
  cubeTick: '<path d="M7 3l9-1v9l-5 3H7z" fill="#d4d4d4"/><path d="M7 5l9-1M1 12l3 3 5-5" stroke-width="2"/>',
  abc: '<path d="M4 2h8v6H4zM1 9h11v6H1zM3 12h2M6 12h2M9 12h2M14 9h3M15 7v9" stroke="#999"/>',
  layerThin: '<path d="M2 4l7-2 7 2-7 3zM2 13l7-2 7 2-7 3zM9 7v4"/>',
  layerSwap: '<path d="M2 4l7-2 7 2-7 3zM2 14l7-2 7 2-7 2zM5 8h8M6 6v6h6V6"/>',
  rows: '<path d="M2 3h14v2H2zM2 8h9M4 11h12v3H4z"/>',
  up: '<path d="M7 1l5 5H9v5H5V6H2z" fill="#d83848" stroke="#902838"/>' + sheet(12),
  downRed: '<path d="M5 1h4v5h3l-5 5-5-5h3z" fill="#d83848" stroke="#902838"/>' + sheet(12),
  flat1: sheet(9) + diamond(5),
  flat3: sheet(7) + sheet(10) + sheet(13) + diamond(5),
  flat4: sheet(7) + sheet(10) + sheet(13) + diamond(5) + diamond(12),
  mesh: '<path d="M3 4l5-2v12l-5 2zM3 8l5-2M3 12l5-2M8 6h3M8 12h4"/><circle cx="13" cy="6" r="3"/><circle cx="13" cy="12" r="3"/>',
  funnel: '<path d="M2 4q4 4 7-1M8 9h8l-3 4v3h-2v-3z" fill="#ddd" stroke="#c4c4c4"/>',
  snap: '<path d="M6 2v9M2 6h8" stroke="#802828"/><circle cx="6" cy="6" r="2" stroke="#802828"/><path d="M8 9h8l-3 3v4l-2-1v-3z" fill="#f4b830" stroke="#c88a10"/>',
  orbit: '<path d="M2 6q6-7 8 2M2 2v4h4" stroke="#3c4c80" stroke-width="2"/><circle cx="11" cy="12" r="3" stroke="#b03030"/><path d="M11 7v10M6 12h10" stroke="#b03030"/>',
  walk: '<path d="M2 4q4-3 8 0M4 6h8" stroke="#667" stroke-width="3"/><path d="M10 8h5v4h-5zM12 12h4v4h-4z" fill="#f0e0b0" stroke="#887"/>',
  hexagon: '<path d="M6 3h6l4 6-4 6H6L2 9z" stroke="#333"/><circle cx="9" cy="9" r="1" fill="#c02020" stroke="#c02020"/>',
  marquee: '<path d="M2 3h14v12H2z" stroke="#222" stroke-dasharray="3 2"/><path d="M1 2h2v2H1zM15 14h2v2h-2z" stroke="#d03030"/>',
  house: '<path d="M2 9l5-6 9 2v5l-6 6-8-3z" fill="#d8dce4" stroke="#556"/><path d="M7 3l4 5 5-3-3-2z" fill="#e8a0a0" stroke="#a04050"/><path d="M2 9l9 2v4M11 11l5-6" stroke="#556"/>',
  cubeBlue: '<path d="M2 5l7-3 7 3v8l-7 4-7-4z" fill="#6ca4f4" stroke="#4478d0"/><path d="M2 5l7 3 7-3-7-3z" fill="#c8e0ff" stroke="#6c94d8"/><path d="M9 8v9" stroke="#3c6cd0"/><path d="M9 1v6" stroke="#d04040"/>'
};

document.querySelectorAll('[data-tools]').forEach(box => {
  box.innerHTML = box.dataset.tools.split(' ').map(name => {
    if (name === '|') return '<span class="sep"></span>';
    if (name === '_') return '<span class="space"></span>';
    if (name === 'v') return '<button class="caret" aria-label="more"></button>';
    if (name === '»') return '<button class="caret more" aria-label="more"><svg viewBox="0 0 8 6"><path d="M0 0l3 3-3 3M4 0l3 3-3 3"/></svg></button>';
    const extra = name === 'funnel' ? ' narrow' : name === 'snap' ? ' boxed' : '';
    return `<button class="tool${extra}" aria-label="${name}"><svg viewBox="0 0 18 18">${icons[name]}</svg></button>`;
  }).join('');
});

const marks = {
  check: '<svg viewBox="0 0 16 16"><path d="M2 9l3-2 2 3 6-7 1 1-7 10H6z" fill="#22c03c" stroke="#149030" stroke-width=".5"/></svg>',
  bang: '<svg viewBox="0 0 16 16"><path d="M5 3q0-3 3-3t3 3l-2 7H7z" fill="#f8d820" stroke="#a88c10"/><circle cx="8" cy="13" r="2" fill="#f8d820" stroke="#a88c10"/></svg>',
  folder: '<svg viewBox="0 0 16 16"><path d="M1.500 13.500V3.500h4l2 2h7v8z" fill="#f8e49c" stroke="#a08c50"/><path d="M7 6h7v8H7z" fill="#e8e4f4"/><path d="M13 7.500H9V10h3.500v2.500H8" fill="none" stroke="#2c1c90" stroke-width="1.400"/></svg>',
  mill: '<svg viewBox="0 0 16 16"><path d="M7 1h5v8H7z" fill="#6068d0" stroke="#28306c"/><path d="M1 2h3q0 8 7 9v3Q1 13 1 2z" fill="#2a7470" stroke="#122"/><path d="M10 11h5M11 14h4" stroke="#223" stroke-dasharray="2 1"/></svg>',
  drill: '<svg viewBox="0 0 16 16"><path d="M1 2v13h13l-4-4H5V6z" fill="#fff" stroke="#111"/><path d="M6 10l2-4 6-5 1 2-6 6z" fill="#5868c8" stroke="#283070"/></svg>'
};

const rows = [
  { text: 'C_PROGRAM', level: 0 },
  { text: '未用项', level: 1, icon: 'folder' },
  { text: 'PROGRAM', level: 1, state: 'bang', icon: 'folder' },
  { text: '粗铣上模', level: 1, state: 'bang', icon: 'folder' }
];
for (let n = 19; n <= 34; n++) {
  rows.push({
    text: n === 34 ? '34-33-85-21' : `${n}-33-85-210`,
    level: 2,
    state: 'check',
    icon: 'mill',
    cls: n === 19 ? 'purple' : [22, 25, 26].includes(n) ? 'selected' : ''
  });
}
rows.push(
  { text: '中心孔在入口拷', level: 2, state: 'check', icon: 'folder' },
  { text: '35钻孔', level: 2, state: 'bang', icon: 'folder', fold: true },
  { text: '35-ZK', level: 3, state: 'check', icon: 'drill', cls: 'purple' },
  { text: '粗铣下模', level: 1, state: 'check', icon: 'folder' },
  { text: '字槽', level: 1, state: 'check', icon: 'folder' },
  { text: '行线', level: 1, state: 'check', icon: 'folder' },
  { text: '下模精铣', level: 1, state: 'check', icon: 'folder' },
  { text: '', level: 0 }
);

document.getElementById('tree').innerHTML = rows.map(r => {
  const lead = r.level === 0 ? '' : r.fold ? '<button class="fold" aria-label="折叠"></button>' : '<span class="branch"></span>';
  const latin = /^[\w-]+$/.test(r.text) ? ' latin' : '';
  return `<li class="row level${r.level} ${r.level ? '' : 'root'} ${r.cls || ''}">${lead}${marks[r.state] || ''}${marks[r.icon] || ''}<span class="label${latin}">${r.text}</span></li>`;
}).join('');
```
